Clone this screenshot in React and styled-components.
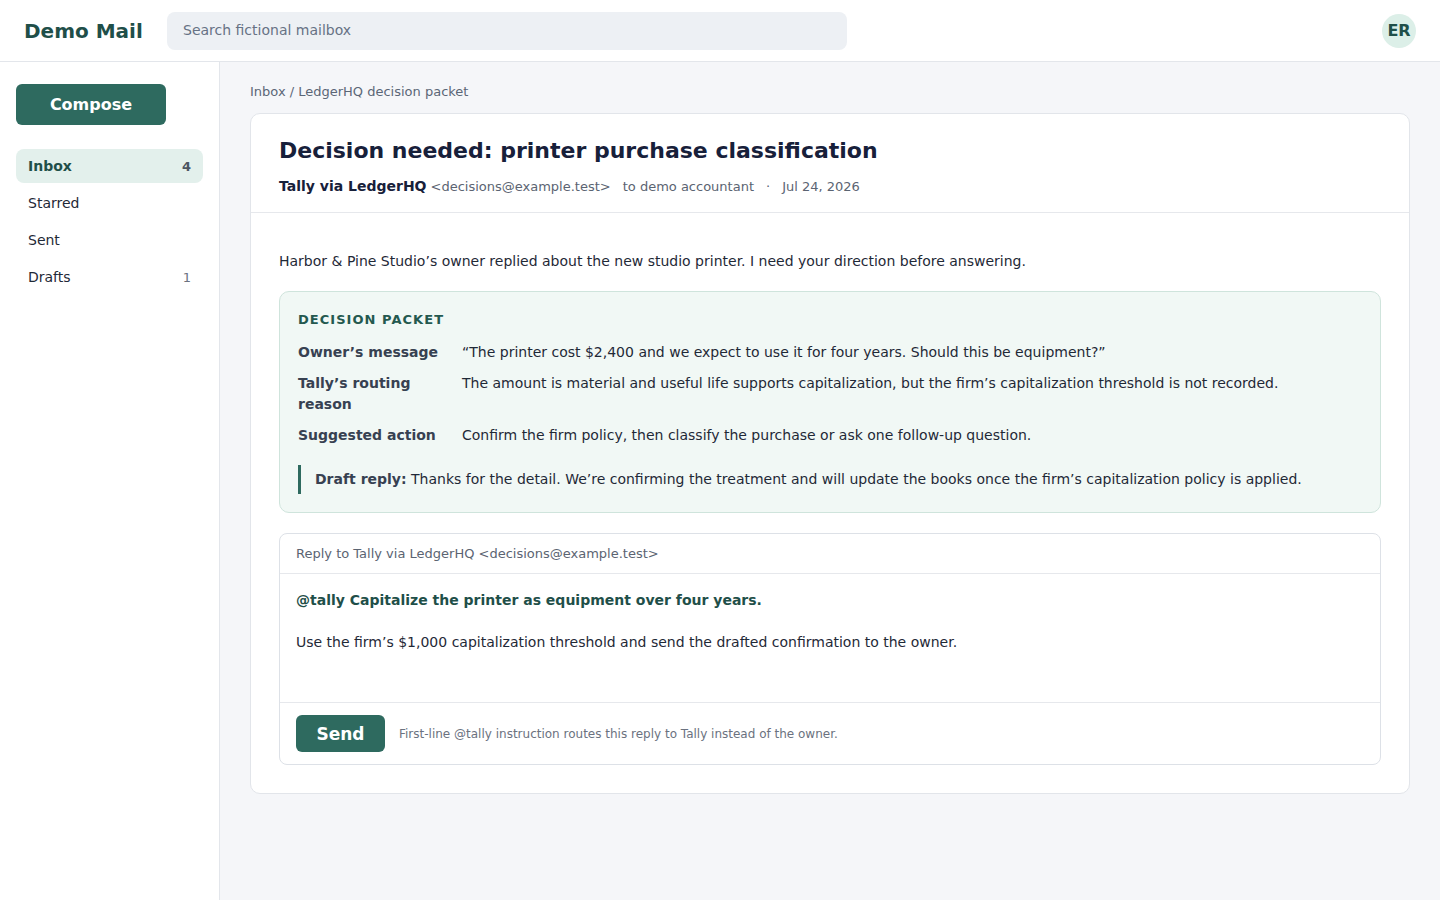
import React from 'react'
import styled, { createGlobalStyle } from 'styled-components'

const GlobalStyle = createGlobalStyle`
    * { box-sizing: border-box; }
    body {
        margin: 0;
        font-family: "DejaVu Sans", "Noto Sans", sans-serif;
        color: #1f2937;
        background: #f5f6f9;
    }
`

const folders = [
    { name: 'Inbox', count: 4, active: true },
    { name: 'Starred' },
    { name: 'Sent' },
    { name: 'Drafts', count: 1 },
]

const packet = [
    { label: 'Owner’s message', text: '“The printer cost $2,400 and we expect to use it for four years. Should this be equipment?”' },
    { label: 'Tally’s routing reason', text: 'The amount is material and useful life supports capitalization, but the firm’s capitalization threshold is not recorded.' },
    { label: 'Suggested action', text: 'Confirm the firm policy, then classify the purchase or ask one follow-up question.' },
]

const App = () => {
    return (
        <>
            <GlobalStyle />
            <Shell>
                <TopBar>
                    <Logo>Demo Mail</Logo>
                    <Search placeholder="Search fictional mailbox" />
                    <Avatar>ER</Avatar>
                </TopBar>
                <Layout>
                    <Sidebar>
                        <ComposeButton>Compose</ComposeButton>
                        <FolderList>
                            {folders.map(f => (
                                <FolderItem key={f.name} $active={f.active}>
                                    <span>{f.name}</span>
                                    {f.count && <FolderCount $active={f.active}>{f.count}</FolderCount>}
                                </FolderItem>
                            ))}
                        </FolderList>
                    </Sidebar>
                    <Main>
                        <Breadcrumb>Inbox / LedgerHQ decision packet</Breadcrumb>
                        <Card>
                            <CardHeader>
                                <Subject>Decision needed: printer purchase classification</Subject>
                                <Meta>
                                    <Sender>Tally via LedgerHQ</Sender>
                                    <span>&lt;decisions@example.test&gt;</span>
                                    <MetaGap>to demo accountant</MetaGap>
                                    <MetaGap>·</MetaGap>
                                    <MetaGap>Jul 24, 2026</MetaGap>
                                </Meta>
                            </CardHeader>
                            <CardBody>
                                <Intro>Harbor &amp; Pine Studio’s owner replied about the new studio printer. I need your direction before answering.</Intro>
                                <Packet>
                                    <PacketTitle>Decision packet</PacketTitle>
                                    <PacketGrid>
                                        {packet.map(row => (
                                            <React.Fragment key={row.label}>
                                                <PacketLabel>{row.label}</PacketLabel>
                                                <PacketText>{row.text}</PacketText>
                                            </React.Fragment>
                                        ))}
                                    </PacketGrid>
                                    <DraftQuote>
                                        <strong>Draft reply:</strong> Thanks for the detail. We’re confirming the treatment and will update the books once the firm’s capitalization policy is applied.
                                    </DraftQuote>
                                </Packet>
                                <Reply>
                                    <ReplyHead>Reply to Tally via LedgerHQ &lt;decisions@example.test&gt;</ReplyHead>
                                    <ReplyBody>
                                        <Instruction>@tally Capitalize the printer as equipment over four years.</Instruction>
                                        <ReplyText>Use the firm’s $1,000 capitalization threshold and send the drafted confirmation to the owner.</ReplyText>
                                    </ReplyBody>
                                    <ReplyFoot>
                                        <SendButton>Send</SendButton>
                                        <Hint>First-line @tally instruction routes this reply to Tally instead of the owner.</Hint>
                                    </ReplyFoot>
                                </Reply>
                            </CardBody>
                        </Card>
                    </Main>
                </Layout>
            </Shell>
        </>
    )
}

const Shell = styled.div`
    min-height: 100vh;
    display: flex;
    flex-direction: column;
`
const TopBar = styled.header`
    height: 62px;
    display: flex;
    align-items: center;
    padding: 0 24px;
    background: #fff;
    border-bottom: 1px solid #e3e6eb;
`
const Logo = styled.div`
    width: 143px;
    font-size: 20px;
    font-weight: 700;
    color: #1f4f49;
`
const Search = styled.input`
    width: 680px;
    height: 38px;
    border: none;
    border-radius: 8px;
    background: #edf0f4;
    padding: 0 16px 2px;
    font-family: inherit;
    font-size: 14px;
    outline: none;
    &::placeholder {
        color: #677284;
    }
`
const Avatar = styled.div`
    margin-left: auto;
    width: 34px;
    height: 34px;
    border-radius: 50%;
    background: #dcefe8;
    color: #1f4f49;
    font-size: 16px;
    font-weight: 700;
    display: flex;
    align-items: center;
    justify-content: center;
`
const Layout = styled.div`
    flex: 1;
    display: flex;
`
const Sidebar = styled.aside`
    width: 220px;
    flex-shrink: 0;
    background: #fff;
    border-right: 1px solid #e3e6eb;
    padding: 22px 16px;
`
const ComposeButton = styled.button`
    width: 150px;
    height: 41px;
    border: none;
    border-radius: 6px;
    background: #2e6a5f;
    color: #fff;
    font-family: inherit;
    font-size: 16px;
    font-weight: 700;
`
const FolderList = styled.nav`
    margin-top: 24px;
    display: flex;
    flex-direction: column;
    gap: 3px;
`
const FolderItem = styled.div`
    height: 34px;
    display: flex;
    align-items: center;
    justify-content: space-between;
    padding: 0 12px;
    border-radius: 8px;
    font-size: 14px;
    background: ${p => (p.$active ? '#e3f0ec' : 'transparent')};
    color: ${p => (p.$active ? '#1f4f49' : '#1f2937')};
    font-weight: ${p => (p.$active ? 700 : 400)};
`
const FolderCount = styled.span`
    font-size: 13px;
    color: ${p => (p.$active ? '#4b5563' : '#6b7280')};
`
const Main = styled.main`
    flex: 1;
    padding: 22px 30px 40px;
`
const Breadcrumb = styled.div`
    font-size: 13px;
    color: #5b6677;
    margin-bottom: 14px;
`
const Card = styled.section`
    background: #fff;
    border: 1px solid #e2e5ea;
    border-radius: 10px;
`
const CardHeader = styled.div`
    padding: 24px 28px 15px;
    border-bottom: 1px solid #e6e8ec;
`
const Subject = styled.h1`
    margin: 0 0 13px;
    font-size: 22px;
    font-weight: 700;
    color: #17203a;
`
const Meta = styled.div`
    font-size: 13px;
    line-height: 20px;
    color: #5b6472;
    display: flex;
    align-items: baseline;
    gap: 4px;
`
const Sender = styled.span`
    font-size: 14px;
    font-weight: 700;
    color: #17203a;
`
const MetaGap = styled.span`
    margin-left: 8px;
`
const CardBody = styled.div`
    padding: 40px 28px 28px;
`
const Intro = styled.p`
    margin: 0 0 22px;
    font-size: 14px;
    color: #1f2937;
`
const Packet = styled.div`
    background: #f1f8f5;
    border: 1px solid #cfe4dc;
    border-radius: 10px;
    padding: 20px 18px 18px;
`
const PacketTitle = styled.div`
    font-size: 13px;
    font-weight: 700;
    letter-spacing: 0.08em;
    text-transform: uppercase;
    color: #24594f;
    margin-bottom: 15px;
`
const PacketGrid = styled.div`
    display: grid;
    grid-template-columns: 164px 1fr;
    row-gap: 10px;
`
const PacketLabel = styled.div`
    font-size: 14px;
    font-weight: 700;
    line-height: 21px;
    color: #374151;
    padding-right: 12px;
`
const PacketText = styled.div`
    font-size: 14px;
    line-height: 21px;
    color: #1f2937;
`
const DraftQuote = styled.div`
    margin-top: 19px;
    border-left: 3px solid #2e6a5f;
    padding: 4px 0 4px 14px;
    font-size: 14px;
    line-height: 21px;
    color: #1f2937;
    & strong {
        color: #374151;
    }
`
const Reply = styled.div`
    margin-top: 20px;
    border: 1px solid #dde1e7;
    border-radius: 8px;
`
const ReplyHead = styled.div`
    height: 40px;
    display: flex;
    align-items: center;
    padding: 0 16px;
    font-size: 13px;
    color: #5b6472;
    border-bottom: 1px solid #e6e8ec;
`
const ReplyBody = styled.div`
    height: 128px;
    padding: 16px;
    font-size: 14px;
    line-height: 21px;
`
const Instruction = styled.p`
    margin: 0 0 21px;
    font-weight: 700;
    color: #1f4f49;
`
const ReplyText = styled.p`
    margin: 0;
    color: #1f2937;
`
const ReplyFoot = styled.div`
    display: flex;
    align-items: center;
    gap: 14px;
    padding: 12px 16px;
    border-top: 1px solid #e6e8ec;
`
const SendButton = styled.button`
    width: 89px;
    height: 37px;
    border: none;
    border-radius: 6px;
    background: #2e6a5f;
    color: #fff;
    font-family: inherit;
    font-size: 17px;
    font-weight: 700;
`
const Hint = styled.span`
    font-size: 12px;
    color: #6b7280;
`

export default App
